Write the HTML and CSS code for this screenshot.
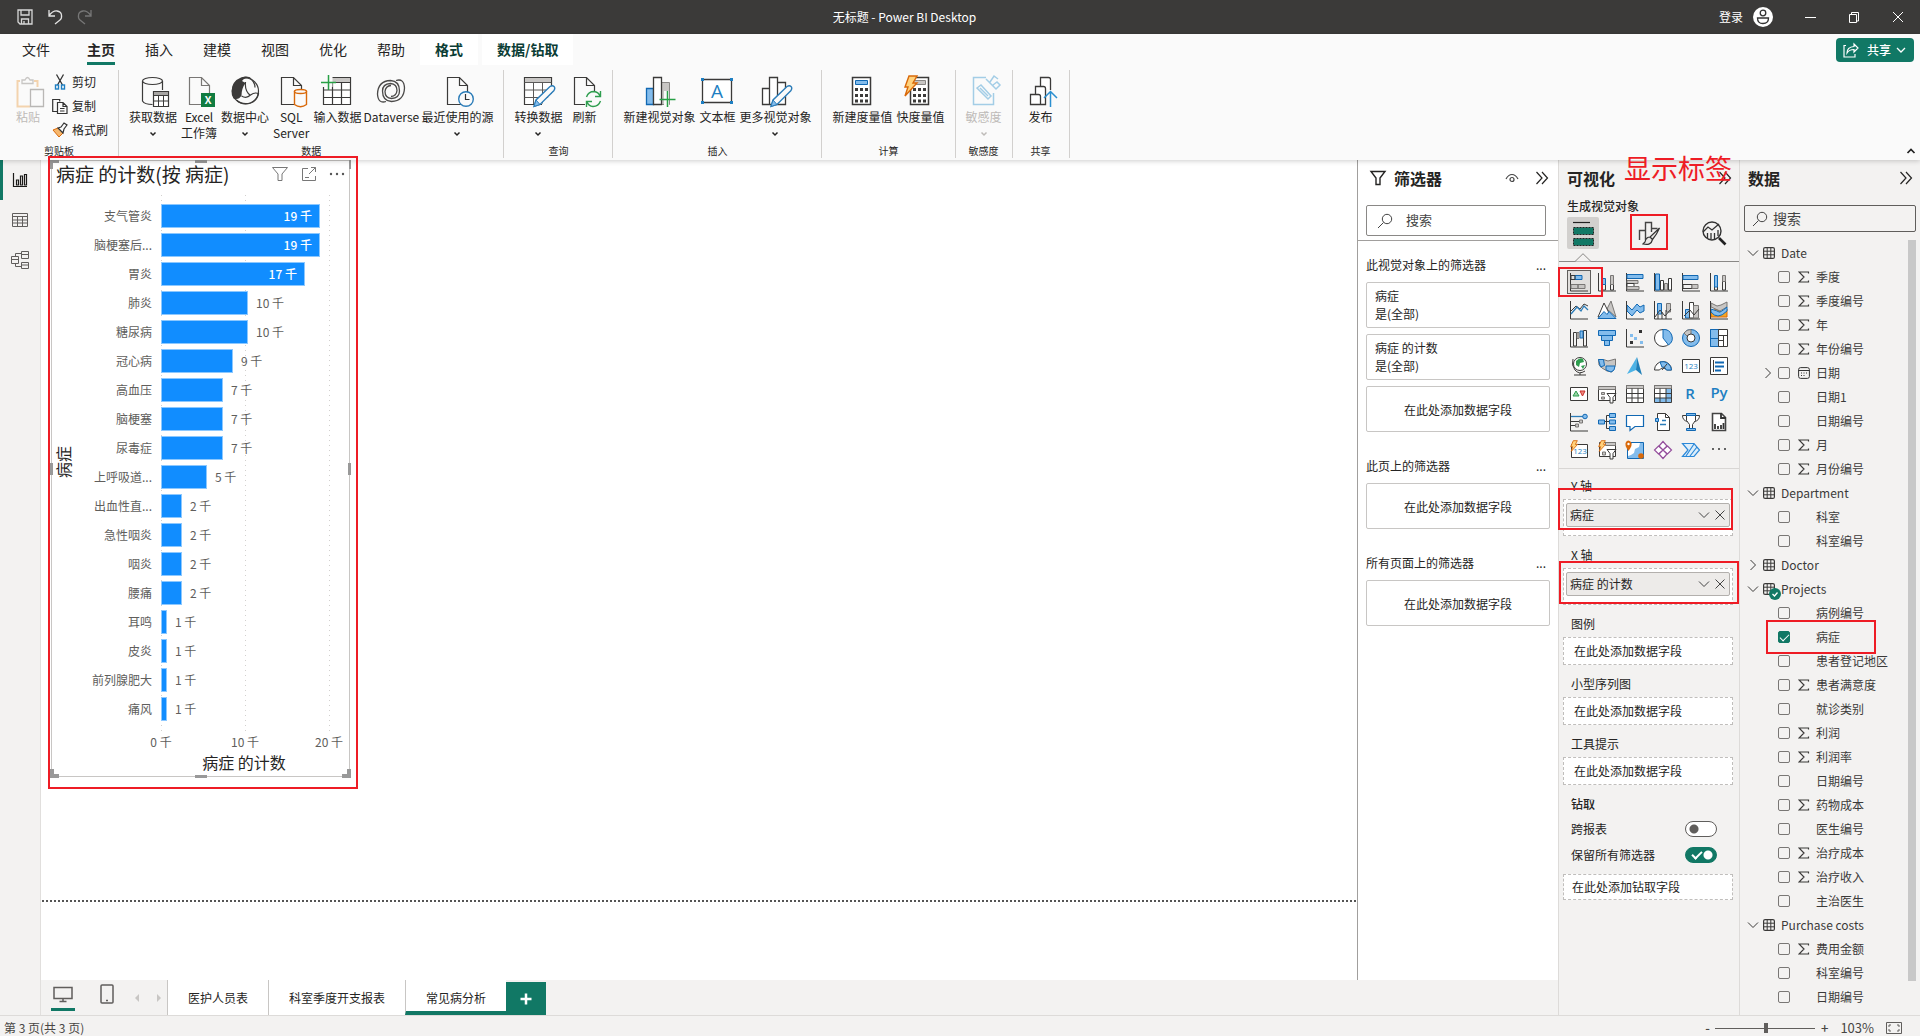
FILE: index.html
```html
<!DOCTYPE html>
<html lang="zh-CN">
<head>
<meta charset="utf-8">
<title>无标题 - Power BI Desktop</title>
<link rel="stylesheet" href="styles.css">
</head>
<body>
<svg class="defs" aria-hidden="true">
  <symbol id="chev-down" viewBox="0 0 12 12"><path d="M1 3.500l5 5 5-5" fill="none" stroke="currentColor"/></symbol>
  <symbol id="chev-right" viewBox="0 0 12 12"><path d="M3.500 1l5 5-5 5" fill="none" stroke="currentColor"/></symbol>
  <symbol id="drop" viewBox="0 0 8 8"><path d="M1.500 2.500L4 5l2.500-2.500" fill="none" stroke="currentColor" stroke-width="1.500"/></symbol>
  <symbol id="collapse" viewBox="0 0 14 14"><path d="M1.500 1l5.500 6-5.500 6M7 1l5.500 6L7 13" fill="none" stroke="currentColor" stroke-width="1.200"/></symbol>
  <symbol id="search" viewBox="0 0 16 16"><circle cx="10" cy="6" r="4.700" fill="none" stroke="currentColor"/><path d="M6.500 9.500L1 15" stroke="currentColor"/></symbol>
  <symbol id="sigma" viewBox="0 0 12 12"><path d="M10.500 2.500V1H1l5 5-5 5h9.500V9.500" fill="none" stroke="currentColor" stroke-width="1.200"/></symbol>
  <symbol id="table" viewBox="0 0 12 12"><rect x=".6" y=".6" width="10.800" height="10.800" rx="1.500" fill="none" stroke="currentColor" stroke-width="1.200"/><path d="M4.200.6v10.800M7.800.6v10.800M.6 4.200h10.800M.6 7.800h10.800" stroke="currentColor"/></symbol>
  <symbol id="close" viewBox="0 0 12 12"><path d="M1.500 1.500l9 9M10.500 1.500l-9 9" stroke="currentColor"/></symbol>
  <symbol id="filter" viewBox="0 0 18 18"><path d="M2 2.500h14L11 9v6.500H7V9z" fill="none" stroke="currentColor" stroke-width="1.400"/></symbol>
  <symbol id="doc" viewBox="0 0 36 36"><path d="M8.500 31.500v-27h12l8 8v19zM20.500 4.500v8h8" fill="#fafafa" stroke="#3b3a39" stroke-width="1.200"/></symbol>
  <symbol id="pencil" viewBox="0 0 36 36"><path d="M14 33.500l2-6.500L30 13.500q2.500-1.500 4 0t0 4L20 31.500z" fill="#fafafa" stroke="#2b7cb8" stroke-width="1.400"/><path d="M14 33.500l2-6.500 4 4.500z" fill="#83bcec" stroke="#2b7cb8"/></symbol>
  <symbol id="bolt" viewBox="0 0 12 18"><path d="M5 1h6L8 6.500h3.500L2 17l2-7H1z" fill="#ffd27d" stroke="#d9690a" stroke-width="1.300"/></symbol>
</svg>

<header class="titlebar">
  <div class="quick">
    <button aria-label="保存"><svg width="16" height="16"><path d="M1 1h14v14H3l-2-2zM4 1v5h8V1M4.500 15v-5h7v5M7 12v3" fill="none" stroke="#d8d8d8" stroke-width="1.300"/></svg></button>
    <button aria-label="撤消"><svg width="16" height="16"><path d="M2 1v6h6M2 6.500Q6 1.500 10 2t4.500 4-1.500 5l-5 4" fill="none" stroke="#e4e4e4" stroke-width="1.300"/></svg></button>
    <button aria-label="恢复"><svg width="16" height="16"><path d="M14 1v6H8M14 6.500Q10 1.500 6 2T1.500 6t1.500 5l5 4" fill="none" stroke="#777" stroke-width="1.300"/></svg></button>
  </div>
  <div class="window-title">无标题 - Power BI Desktop</div>
  <div class="account"><button>登录</button><svg width="20" height="20"><circle cx="10" cy="10" r="10" fill="#fff"/><circle cx="10" cy="6" r="2.800" fill="none" stroke="#333" stroke-width="1.300"/><path d="M4.500 11h11q0 5.500-5.500 5.500T4.500 11z" fill="none" stroke="#333" stroke-width="1.300"/></svg></div>
  <div class="window-controls">
    <button aria-label="最小化"><svg width="12" height="12"><path d="M1 6.500h11" stroke="#fff"/></svg></button>
    <button aria-label="还原"><svg width="12" height="12"><path d="M1.500 3.500h7v8h-7zM3.500 3V1.500h7V10H9" fill="none" stroke="#fff"/></svg></button>
    <button aria-label="关闭"><svg width="12" height="12"><path d="M1 1l10 10M11 1L1 11" stroke="#fff"/></svg></button>
  </div>
</header>

<div class="ribbon">
  <nav class="tabs">
    <button class="tab file">文件</button><button class="tab active"><span>主页</span></button><button class="tab">插入</button><button class="tab">建模</button><button class="tab">视图</button><button class="tab">优化</button><button class="tab">帮助</button><button class="tab ctx">格式</button><button class="tab ctx">数据/钻取</button>
    <button class="share"><svg width="16" height="16"><path d="M3 3.500H1v11.500h11V12M4 11q0-6 7-6.500V2l4 4-4 4V7.500Q6 7.500 4 11z" fill="none" stroke="#fff" stroke-width="1.200"/></svg>共享<svg width="10" height="10"><path d="M1 3l4 4 4-4" fill="none" stroke="#fff" stroke-width="1.300"/></svg></button>
  </nav>
  <div class="groups">
    <section class="group">
      <div class="items">
        <button class="item off"><svg width="36" height="36"><path d="M10 8H7.500v25.500H20M24 8h3.500v6" fill="none" stroke="#f3d3ae" stroke-width="2"/><path d="M12 10.500h11V7h-3Q17.500 2 15 7h-3z" fill="#fafafa" stroke="#c8c6c4" stroke-width="1.300"/><path d="M20.500 16.500h13v17h-13z" fill="#fafafa" stroke="#b9b7b5" stroke-width="1.300"/></svg>粘贴</button>
        <div class="small-items">
          <button><svg width="16" height="16"><path d="M4.500.5l6 10.500M11.500.5L5.500 11" stroke="#333" stroke-width="1.300"/><rect x="3.500" y="11" width="3" height="4" fill="none" stroke="#1e7fc2" stroke-width="1.400"/><rect x="9.500" y="11" width="3" height="4" fill="none" stroke="#1e7fc2" stroke-width="1.400"/></svg>剪切</button>
          <button><svg width="16" height="16"><path d="M5 13.500H.7V1.500h7v2M5.500 4.500h5.500l4 4v7H5.500zM11 4.500v4h4M8 10.500h4.500M8 13h4.500" fill="none" stroke="#333" stroke-width="1.200"/></svg>复制</button>
          <button><svg width="16" height="16"><path d="M1 8l5-2 5 5-4 4z" fill="#f6b76d" stroke="#d9690a"/><path d="M6 6l3-1 3-4 3 2-3 4-1 4z" fill="#fafafa" stroke="#333" stroke-width="1.200"/></svg>格式刷</button>
        </div>
      </div>
      <h3>剪贴板</h3>
    </section>
    <section class="group">
      <div class="items">
        <button class="item"><svg width="36" height="36"><path d="M7.500 8v20q2 3.500 10 3.500M27.500 8v9" fill="none" stroke="#3b3a39" stroke-width="1.200"/><ellipse cx="17.500" cy="8" rx="10" ry="3.500" fill="none" stroke="#3b3a39" stroke-width="1.200"/><path d="M18.500 18.500h15v15h-15z" fill="#fff" stroke="#3b3a39" stroke-width="1.200"/><path d="M19 19h14v3H19z" fill="#a7a5a3"/><path d="M18.500 22.500h15M18.500 28h15M23.500 22v11M28.500 22v11" stroke="#3b3a39"/></svg>获取数据<svg class="drop"><use href="#drop"/></svg></button>
        <button class="item"><svg width="36" height="36"><path d="M8.500 31.500v-27h12l8 8v19zM20.500 4.500v8h8" fill="#fafafa" stroke="#797775" stroke-width="1.200"/><path d="M20 20h14v14H20z" fill="#107c41"/><text x="27" y="31" class="xl">X</text></svg>Excel<br>工作簿</button>
        <button class="item"><svg width="36" height="36"><circle cx="18.500" cy="18" r="13" fill="#fafafa" stroke="#3b3a39" stroke-width="1.200"/><path d="M15 8q3-4 9-3-5-2-10-.5Q5 8 4.500 18q-.2 4 2 7.500 5 2 8-3 0-7 4-12.500z" fill="#3b3a39"/><path d="M13 7q3-4 9-2.500 6 4 6 10M18.500 9q-1 9 5 13.500M14.500 23q5 3 9-1 4-3 8-1.500-1 7-8 9.500-9 2-14-3" fill="none" stroke="#3b3a39" stroke-width="1.200"/></svg>数据中心<svg class="drop"><use href="#drop"/></svg></button>
        <button class="item"><svg width="36" height="36"><use href="#doc"/><path d="M21.500 18.500v13q6 4.500 12 0v-13z" fill="#fafafa" stroke="#d9690a" stroke-width="1.400"/><ellipse cx="27.500" cy="18.500" rx="6" ry="2" fill="#fafafa" stroke="#d9690a" stroke-width="1.400"/></svg>SQL<br>Server</button>
        <button class="item"><svg width="36" height="36"><path d="M4.500 4.500h27v27h-27z" fill="#fff" stroke="#3b3a39" stroke-width="1.200"/><path d="M5 5h26v4H5z" fill="#c8c6c4"/><path d="M4.500 9.500h27M4.500 17h27M4.500 24.500h27M13.500 9v22M22.500 9v22" stroke="#3b3a39" stroke-width="1.200"/><path d="M3 2h10.500v12H3z" fill="#fafafa"/><path d="M2 9.500h15M9.500 2v15" stroke="#27a045" stroke-width="1.500"/></svg>输入数据</button>
        <button class="item tight"><svg width="36" height="36"><g fill="none" stroke="#4a4948" stroke-width="1.300"><path id="swirl" d="M13 28.500Q5 31 4.500 21 5 8 17.500 7.500q9 .5 9 10.500 0 7-8 7.500-6.500-.5-6.500-7 .5-5.500 6-6"/><use href="#swirl" transform="rotate(180 18 18)"/></g></svg>Dataverse</button>
        <button class="item"><svg width="36" height="36"><use href="#doc"/><circle cx="27" cy="26" r="7.300" fill="#fafafa" stroke="#2b7cb8" stroke-width="1.400"/><path d="M26.500 21v5.500h4" fill="none" stroke="#333" stroke-width="1.200"/></svg>最近使用的源<svg class="drop"><use href="#drop"/></svg></button>
      </div>
      <h3>数据</h3>
    </section>
    <section class="group">
      <div class="items">
        <button class="item"><svg width="36" height="36"><path d="M4.500 4.500h27v27h-27z" fill="#fff" stroke="#3b3a39" stroke-width="1.200"/><path d="M5 5h26v4H5z" fill="#c8c6c4"/><path d="M4.500 9.500h27M4.500 17h27M4.500 24.500h27M13.500 9v22M22.500 9v22" stroke="#5b5a59"/><path d="M22 31L33 19v14H22z" fill="#fafafa"/><use href="#pencil"/></svg>转换数据<svg class="drop"><use href="#drop"/></svg></button>
        <button class="item"><svg width="36" height="36"><use href="#doc"/><path d="M19 18h17v18H19z" fill="#fafafa"/><path d="M20.500 24q2-5.500 7.500-5.500 4.500.5 6 4.500M34.500 18v5.500H29M34.500 28q-2 5.500-7.500 5.500-4.500-.5-6-4.500M20.500 34v-5.500H26" fill="none" stroke="#2f9e4f" stroke-width="1.400"/></svg>刷新</button>
      </div>
      <h3>查询</h3>
    </section>
    <section class="group">
      <div class="items">
        <button class="item"><svg width="36" height="36"><path d="M5.500 15.500h7v16h-7z" fill="#83bcec" stroke="#1168b3" stroke-width="1.300"/><path d="M20.500 9.500h8v22h-8z" fill="#c8c6c4" stroke="#8a8886"/><path d="M12.500 4.500h8v27h-8z" fill="#fff" stroke="#3b3a39" stroke-width="1.300"/><path d="M23 18h5v16h-5z" fill="#fafafa"/><path d="M26.500 18v16M18.500 26.500h16" stroke="#27a045" stroke-width="1.500"/></svg>新建视觉对象</button>
        <button class="item"><svg width="36" height="36"><path d="M3.500 6.500h29v23h-29z" fill="#fff" stroke="#3b3a39" stroke-width="1.300"/><path d="M2 5h3v3H2zM31 5h3v3h-3zM2 28h3v3H2zM31 28h3v3h-3z" fill="#1e7fc2"/><text x="18" y="25" class="box-a">A</text></svg>文本框</button>
        <button class="item"><svg width="36" height="36"><path d="M5.500 15.500h7v16h-7zM20.500 9.500h8v22h-8zM12.500 4.500h8v27h-8z" fill="#fff" stroke="#3b3a39" stroke-width="1.300"/><use href="#pencil"/></svg>更多视觉对象<svg class="drop"><use href="#drop"/></svg></button>
      </div>
      <h3>插入</h3>
    </section>
    <section class="group">
      <div class="items">
        <button class="item"><svg width="36" height="36"><path d="M8.500 4.500h18v27h-18z" fill="#fff" stroke="#3b3a39" stroke-width="1.500"/><path d="M11.500 7.500h12v4h-12z" fill="#83bcec" stroke="#1168b3"/><path d="M11 16.500h14M11 22.500h14M11 28h14" stroke="#3b3a39" stroke-width="3" stroke-dasharray="3 2"/></svg>新建度量值</button>
        <button class="item"><svg width="36" height="36"><path d="M8.500 4.500h18v27h-18z" fill="#fff" stroke="#3b3a39" stroke-width="1.500"/><path d="M11.500 7.500h12v4h-12z" fill="#c8c6c4" stroke="#8a8886"/><path d="M11 16.500h14M11 22.500h14M11 28h14" stroke="#3b3a39" stroke-width="3" stroke-dasharray="3 2"/><path d="M7 3h8l-4 7h4L3 23l3-9H3z" fill="#ffd27d" stroke="#d9690a" stroke-width="1.400"/></svg>快度量值</button>
      </div>
      <h3>计算</h3>
    </section>
    <section class="group">
      <div class="items">
        <button class="item off"><svg width="36" height="36" fill="none" stroke="#a3cde6" stroke-width="1.500"><path d="M20 4.500H7.500v27h20V20"/><path d="M11 15l4-3 10 11-3 3zM14 15l8 8M20 6l10 10 4-4-3-3-4 3M24 9l4-6 4 3" /></svg>敏感度<svg class="drop"><use href="#drop"/></svg></button>
      </div>
      <h3>敏感度</h3>
    </section>
    <section class="group">
      <div class="items">
        <button class="item"><svg width="36" height="36"><path d="M7.500 21.500h8q2 0 2 2v8h-10zM12.500 21V13.500h8q2 0 2 2V31.500h-5M17.500 13V4.500h8q2 0 2 2V17" fill="#fff" stroke="#3b3a39" stroke-width="1.300"/><path d="M27.500 34V19M21 25l6.500-6.500L34 25" fill="none" stroke="#2b8fd0" stroke-width="1.500"/></svg>发布</button>
      </div>
      <h3>共享</h3>
    </section>
    <button class="ribbon-fold" aria-label="折叠功能区"><svg width="10" height="10"><path d="M1.500 7L5 3.500 8.500 7" fill="none" stroke="#222" stroke-width="1.700"/></svg></button>
  </div>
</div>

<main class="workspace">
  <nav class="rail">
    <button class="active" aria-label="报表视图"><svg width="18" height="18"><path d="M2.500 2v13.500H16M5.500 14V9h2v5zM9.500 14V5h2v9zM13.500 14V3.500h2V14z" fill="none" stroke="#1b1a19" stroke-width="1.200"/></svg></button>
    <button aria-label="数据视图"><svg width="18" height="18"><path d="M1.500 2.500h15v13h-15zM1.500 5.500h15M1.500 9h15M1.500 12h15M6.500 5.500v10M11.500 5.500v10" fill="none" stroke="#605e5c"/></svg></button>
    <button aria-label="模型视图"><svg width="18" height="18"><path d="M.5 5.500h7v7h-7zM.5 8.500h7M10.500.5h7v7h-7zM10.500 3.500h7M10.500 11.500h7v6h-7zM10.500 14h7M4.500 5.500v-3h6M4.500 12.500v3h6" fill="none" stroke="#605e5c"/></svg></button>
  </nav>

  <div class="center">
    <div class="stage">
      <section class="canvas">
        <article class="visual">
          <span class="mark mark-visual"></span>
          <i class="h nw"></i><i class="h n"></i><i class="h ne"></i><i class="h w"></i><i class="h e"></i><i class="h sw"></i><i class="h s"></i><i class="h se"></i>
          <header>
            <h2>病症 的计数(按 病症)</h2>
            <svg width="18" height="18"><path d="M1.500 2.500h15L11 9v6.500H7V9z" fill="none" stroke="#777"/></svg>
            <svg width="16" height="16"><path d="M7 2.500H1.500v12h13V10M4 11.500h4M10 1.500h4.500V6M14.500 1.500L8 8" fill="none" stroke="#777"/></svg>
            <svg width="16" height="16" fill="#555"><circle cx="2" cy="8" r="1.200"/><circle cx="8" cy="8" r="1.200"/><circle cx="14" cy="8" r="1.200"/></svg>
          </header>
          <div class="chart">
            <div class="ytitle">病症</div>
            <ul class="bars">
              <li><span>支气管炎</span><b class="in" style="width:159px">19 千</b></li>
              <li><span>脑梗塞后...</span><b class="in" style="width:159px">19 千</b></li>
              <li><span>胃炎</span><b class="in" style="width:144px">17 千</b></li>
              <li><span>肺炎</span><b style="width:87px"></b>10 千</li>
              <li><span>糖尿病</span><b style="width:87px"></b>10 千</li>
              <li><span>冠心病</span><b style="width:72px"></b>9 千</li>
              <li><span>高血压</span><b style="width:62px"></b>7 千</li>
              <li><span>脑梗塞</span><b style="width:62px"></b>7 千</li>
              <li><span>尿毒症</span><b style="width:62px"></b>7 千</li>
              <li><span>上呼吸道...</span><b style="width:46px"></b>5 千</li>
              <li><span>出血性直...</span><b style="width:21px"></b>2 千</li>
              <li><span>急性咽炎</span><b style="width:21px"></b>2 千</li>
              <li><span>咽炎</span><b style="width:21px"></b>2 千</li>
              <li><span>腰痛</span><b style="width:21px"></b>2 千</li>
              <li><span>耳鸣</span><b style="width:6px"></b>1 千</li>
              <li><span>皮炎</span><b style="width:6px"></b>1 千</li>
              <li><span>前列腺肥大</span><b style="width:6px"></b>1 千</li>
              <li><span>痛风</span><b style="width:6px"></b>1 千</li>
            </ul>
          </div>
          <div class="xticks"><span>0 千</span><span>10 千</span><span>20 千</span></div>
          <div class="xtitle">病症 的计数</div>
        </article>
        <div class="page-edge"></div>
      </section>

      <aside class="filters">
        <header class="filters-head">
          <div class="pane-title"><svg width="18" height="18"><use href="#filter"/></svg><h2>筛选器</h2><svg class="eye" width="14" height="14"><path d="M1 8q2.500-4.500 6-4.500T13 8" fill="none" stroke="#444" stroke-width="1.200"/><circle cx="7" cy="8.500" r="2" fill="none" stroke="#444" stroke-width="1.200"/></svg><svg width="14" height="14"><use href="#collapse"/></svg></div>
          <label class="search"><svg width="16" height="16"><use href="#search"/></svg><input type="text" placeholder="搜索" aria-label="搜索筛选器"></label>
        </header>
        <section><h4>此视觉对象上的筛选器<span>...</span></h4>
          <div class="card">病症<br>是(全部)</div>
          <div class="card">病症 的计数<br>是(全部)</div>
          <div class="card drop-here">在此处添加数据字段</div></section>
        <section><h4>此页上的筛选器<span>...</span></h4><div class="card drop-here">在此处添加数据字段</div></section>
        <section><h4>所有页面上的筛选器<span>...</span></h4><div class="card drop-here">在此处添加数据字段</div></section>
      </aside>
    </div>
    <nav class="pages">
      <button class="view on" aria-label="桌面布局"><svg width="20" height="16"><path d="M1 1.500h18v11H1zM10 12.500V15M6.500 15.500h7" fill="none" stroke="#605e5c" stroke-width="1.500"/></svg></button>
      <button class="view phone" aria-label="移动布局"><svg width="14" height="20"><rect x="1" y="1" width="12" height="18" rx="1" fill="none" stroke="#605e5c" stroke-width="1.500"/><path d="M6 16.500h2" stroke="#605e5c" stroke-width="1.500"/></svg></button>
      <button class="arrow" aria-label="上一页"><svg width="6" height="10"><path d="M5 1v8L1 5z" fill="#c8c6c4"/></svg></button>
      <button class="arrow" aria-label="下一页"><svg width="6" height="10"><path d="M1 1v8l4-4z" fill="#c8c6c4"/></svg></button>
      <button class="page">医护人员表</button><button class="page">科室季度开支报表</button><button class="page current">常见病分析</button>
      <button class="add" aria-label="新建页"><svg width="12" height="12"><path d="M6 .5v11M.5 6h11" stroke="#fff" stroke-width="2.500"/></svg></button>
    </nav>
  </div>

  <aside class="viz">
    <div class="pane-title"><h2>可视化</h2><svg width="14" height="14"><use href="#collapse"/></svg></div>
    <span class="note">显示标签</span>
    <h3 class="sub">生成视觉对象</h3>
    <div class="modes">
      <button class="on" aria-label="生成视觉对象"><svg width="24" height="26"><path d="M2 2.500h17" stroke="#222" stroke-width="1.200"/><path d="M2.500 7.500h20v7h-20zM2.500 18.500h20v7h-20z" fill="#117865" stroke="#222" stroke-dasharray="2 1"/></svg></button>
      <button class="fmt" aria-label="设置视觉对象格式"><svg width="24" height="26"><path d="M2.500 20V10.500h6M8.500 20V2.500h6V12M14.500 8.500h6" fill="none" stroke="#444" stroke-width="1.400"/><path d="M22.500 8L13 17l2.500 2.500Q20 14 22.500 8zM13 17q-4 0-5 5l-2 2q8 2 9.500-4.500" fill="#e8e6e4" stroke="#333" stroke-width="1.200"/></svg><span class="mark mark-fmt"></span></button>
      <button aria-label="分析"><svg width="26" height="26"><circle cx="11" cy="11" r="9" fill="none" stroke="#333" stroke-width="1.400"/><path d="M18 18l6.500 6.500" stroke="#222" stroke-width="2.600"/><path d="M2 12l5-5 4 3 7-6M6.500 18v-5M10 19v-6M13.500 19v-6M17 16v-6" fill="none" stroke="#333" stroke-width="1.300"/></svg></button>
    </div>
    <svg class="caret" width="18" height="9"><path d="M0 8.500h1L9 .7l8 7.800h1" fill="#f3f2f1" stroke="#8a8886"/></svg>
    <div class="gallery">
      <button class="on"><svg viewBox="0 0 20 20"><path class="k" d="M1.500 1v18H19"/><path class="g" d="M2 12.500h7v4H2zM9 12.500h7v4H9z"/><path class="b" d="M6 3.500h7v4H6z"/><path class="k" d="M2 3.500h4v4H2z"/></svg><span class="mark mark-gal"></span></button>
      <button><svg viewBox="0 0 20 20"><path class="k" d="M1.500 1v18H19M5.500 12.500h3V18h-3zM13.500 12.500h3V18h-3z"/><path class="b" d="M5.500 6.500h3v6h-3z"/><path class="g" d="M13.500 3.500h3v9h-3z"/></svg></button>
      <button><svg viewBox="0 0 20 20"><path class="k" d="M1.500 1v18H19"/><path class="b" d="M2 2.500h16v4H2z"/><path class="g" d="M2 8.500h11v3H2z"/><path class="w" d="M2 11.500h7v3H2z"/><path class="g" d="M2 14.500h12v3H2z"/></svg></button>
      <button><svg viewBox="0 0 20 20"><path class="k" d="M1.500 1v18H19"/><path class="b" d="M2.500 2v16h4V2z"/><path class="w" d="M7.500 8.500h3V18h-3z"/><path class="g" d="M11.500 11.500h3V18h-3z"/><path class="w" d="M15.500 6.500h3V18h-3z"/></svg></button>
      <button><svg viewBox="0 0 20 20"><path class="k" d="M1.500 1v18H19M2 12.500h9v4H2z"/><path class="b" d="M2 3.500h15v4H2z"/><path class="g" d="M11 12.500h6v4h-6z"/></svg></button>
      <button><svg viewBox="0 0 20 20"><path class="k" d="M1.500 1v18H19M13.500 8.500h3V18h-3zM5.500 14h3v4h-3z"/><path class="b" d="M5.500 3.500h3V15h-3z"/><path class="g" d="M13.500 3.500h3v6h-3z"/></svg></button>

      <button><svg viewBox="0 0 20 20"><path class="k" d="M1.500 1v18H19M2 11l5-5 4 3 4-5 4 2"/><path class="bl" d="M2 14l6-7 4 4 3-5 4 4"/></svg></button>
      <button><svg viewBox="0 0 20 20"><path class="g" d="M10 9l4-8 5 16z"/><path class="w" d="M1 17L7 3l7 14z"/><path class="b" d="M1 18.500l6-7 3 3 2-3 7 7z"/></svg></button>
      <button><svg viewBox="0 0 20 20"><path class="b" d="M2 5l5 5 5-6 3 3 4-2v6l-4 2-3-3-5 6-5-5z"/><path class="k" d="M1.500 1v18H19"/></svg></button>
      <button><svg viewBox="0 0 20 20"><path class="b" d="M4.500 3.500h4V14h-4z"/><path class="g" d="M13.500 3.500h4V12h-4z"/><path class="k" d="M1.500 1v18H19M5 14v5M9 12v7M13 10v9M2 17l5-7 5 6 6-7"/></svg></button>
      <button><svg viewBox="0 0 20 20"><path class="b" d="M4.500 9.500h4V18h-4z"/><path class="w" d="M8.500 2.500h4V18h-4z"/><path class="g" d="M12.500 5.500h5V18h-5z"/><path class="k" d="M1.500 1v18H19M3 16l6-6 4 5 5-6"/></svg></button>
      <button><svg viewBox="0 0 20 20"><path d="M2 12l5-3 5 3 6-3v8H2z" fill="#f5a623" stroke="#d9690a"/><path class="g" d="M2 3l6 3 4-1 6-3v5l-7 4-9-4z"/><path class="b" d="M2 9q7 2 8 3t8-5v4q-5 5-9 5t-7-4z"/><path class="k" d="M1.500 1v18H19"/></svg></button>

      <button><svg viewBox="0 0 20 20"><path class="k" d="M1.500 1v18H19M4.500 4.500h3V18h-3zM14.500 2.500h3V18h-3z"/><path class="b" d="M11 3v7h3V3z"/><path class="g" d="M8 4.500h2v6H8z"/></svg></button>
      <button><svg viewBox="0 0 20 20"><path class="b" d="M1.500 2.500h17v5h-17zM4.500 7.500h11v5h-11zM7.500 12.500h5v5h-5z"/></svg></button>
      <button><svg viewBox="0 0 20 20"><path class="k" d="M1.500 1v18H19"/><path d="M14 2h3v3h-3zM5 13h3v3H5z" fill="#333"/><path d="M5 6h3v3H5zM9 9h3v3H9zM15 13h3v3h-3z" fill="#83bcec"/></svg></button>
      <button><svg viewBox="0 0 20 20"><circle class="w" cx="10" cy="10" r="8.500"/><path class="b" d="M10 1.500V10l5.500 7A8.500 8.500 0 0010 1.500z"/></svg></button>
      <button><svg viewBox="0 0 20 20"><circle class="b" cx="10" cy="10" r="8.500"/><path class="g" d="M3 5a8.500 8.500 0 017-3.500V6L6 8z"/><circle class="w" cx="10" cy="10" r="4"/></svg></button>
      <button><svg viewBox="0 0 20 20"><path class="w" d="M1.500 1.500h17v17h-17z"/><path class="b" d="M1.500 1.500h8v9h-8zM1.500 10.500h8v8h-8z"/><path class="k" d="M9.500 7.500h9M14.500 7.500v11M9.500 12.500h5M9.500 1.500v17"/></svg></button>

      <button><svg viewBox="0 0 20 20"><circle class="w" cx="11" cy="8" r="6.500"/><path d="M7 5q4-4 7-2l1 3-4 1-1 4-3-2zM12 10l4-1-2 4z" fill="#2f9e4f"/><path class="k" d="M4 3q-2 6 2 11t10 1M11 17v2M5 19h12"/></svg></button>
      <button><svg viewBox="0 0 20 20"><path class="g" d="M1.500 3.500h5L11 5l7.500-2v6L15 16l-5-1-5-3-3-3z"/><path class="b" d="M1.500 3.500h5l1 6-4 1.500zM9 10h9q0 5-4 6l-5-2z"/></svg></button>
      <button><svg viewBox="0 0 20 20"><path d="M12 1L2 18l9-4z" fill="#4db3e6"/><path d="M12 1l5 18-6-5z" fill="#1f7fb8"/></svg></button>
      <button><svg viewBox="0 0 20 20"><path class="w" d="M1.500 14a8.500 8.500 0 0117 0h-5a4 4 0 00-7 0z"/><path class="b" d="M7 6a9 9 0 0111.500 8h-5Q12 10 9 11z"/><path class="k" d="M9 14l5-6"/></svg></button>
      <button><svg viewBox="0 0 20 20"><path class="w" d="M1.500 3.500h17v13h-17z"/><text x="10" y="13">123</text></svg></button>
      <button><svg viewBox="0 0 20 20"><path class="w" d="M1.500 1.500h17v17h-17z"/><path class="k" d="M4.500 4v12"/><path d="M6 6.500h9M6 10.500h9M6 14.500h6" stroke="#1168b3" stroke-width="2"/></svg></button>

      <button><svg viewBox="0 0 20 20"><path class="w" d="M1.500 3.500h17v13h-17z"/><path d="M4 12l3-5 3 5z" fill="#9bd3a8" stroke="#2f9e4f"/><path d="M11 7h5l-2.500 5z" fill="#f08a80" stroke="#c9302c"/></svg></button>
      <button><svg viewBox="0 0 20 20"><path class="w" d="M1.500 2.500h17v14h-17z"/><path class="g" d="M1.500 2.500h17v3h-17zM4.500 8.500h3v2h-3zM4.500 13h3v2h-3z"/><path class="w" d="M10 9.500h9l-3 4V19h-3v-5.500z"/></svg></button>
      <button><svg viewBox="0 0 20 20"><path class="w" d="M1.500 1.500h17v17h-17z"/><path class="g" d="M1.500 1.500h17v3h-17z"/><path class="k" d="M1.500 9.500h17M1.500 14h17M7 4.500v14M13 4.500v14"/></svg></button>
      <button><svg viewBox="0 0 20 20"><path class="w" d="M1.500 1.500h17v17h-17z"/><path d="M13 5h5v13h-5zM2 14h16v4H2z" fill="#83bcec"/><path class="g" d="M1.500 1.500h17v3h-17z"/><path class="k" d="M1.500 9.500h17M1.500 14h17M7 4.500v14M13 4.500v14"/></svg></button>
      <button><svg viewBox="0 0 20 20"><text class="big" x="9" y="15">R</text></svg></button>
      <button><svg viewBox="0 0 20 20"><text class="big" x="10" y="14">Py</text></svg></button>

      <button><svg viewBox="0 0 20 20"><path class="k" d="M1.500 1v18H19M2 9.500h10M2 13.500h5"/><path class="bl" d="M2 4.500h12"/><circle class="b" cx="16" cy="4.500" r="2.300"/><path class="g" d="M10.500 8h3v3h-3zM6.500 12h3v3h-3z"/></svg></button>
      <button><svg viewBox="0 0 20 20"><path class="k" d="M7 9.500h5M9.500 3.500v13M9.500 3.500H13M9.500 16.500H13"/><path class="b" d="M1.500 8h6v4h-6zM12.500 1.500h6v4h-6zM12.500 8h6v4h-6zM12.500 14.500h6v4h-6z"/></svg></button>
      <button><svg viewBox="0 0 20 20"><path d="M1.500 3.500h17v11H10L5 18.500v-4H1.500z" fill="#fff" stroke="#1168b3" stroke-width="1.200"/></svg></button>
      <button><svg viewBox="0 0 20 20"><path class="w" d="M4.500 1.500h8l4 4v13h-12z"/><path class="k" d="M12.500 1.500v4h4"/><path class="b" d="M2.500 6.500h3v3h-3z"/><path class="bl" d="M9 8.500h4M7 12.500h6"/></svg></button>
      <button><svg viewBox="0 0 20 20"><path class="w" d="M5.500 3.500h-4q0 5 5 6M14.500 3.500h4q0 5-5 6M5.500 1.500h9v7l-3 4v4h-3v-4l-3-4z"/><path class="b" d="M5.500 1.500h9v2h-9zM5.500 16.500h9v2h-9z"/></svg></button>
      <button><svg viewBox="0 0 20 20"><path d="M3.500 1.500h9l4 4v13h-13z" fill="#fff" stroke="#444" stroke-width="1.600"/><path d="M12 1v5h5M6 12v5M9 14v3M12 13v4M14.500 11v6" stroke="#333" stroke-width="1.800" fill="none"/></svg></button>

      <button><svg viewBox="0 0 20 20"><path class="w" d="M2.500 4.500h16v13h-16z"/><text x="11" y="14">123</text><use href="#bolt" width="10" height="12"/></svg></button>
      <button><svg viewBox="0 0 20 20"><path class="w" d="M2.500 2.500h16v14h-16z"/><path class="g" d="M8.500 2.500h10v3h-10zM5.500 12h3v3h-3z"/><path class="w" d="M10 9.500h9l-3 4V19h-3v-5.500z"/><use href="#bolt" width="10" height="12"/></svg></button>
      <button><svg viewBox="0 0 20 20"><path class="b" d="M2.500 2.500h16v16h-16z"/><path d="M7 3h8l-1 4-4 2-1 4-3 2-3 1V9z" fill="#fff"/><path d="M3.500 11Q-1 5 1 2t5 0q2 3-2.500 9z" fill="#d9690a"/><circle cx="3.500" cy="4" r="1.200" fill="#fff"/><circle cx="16" cy="16" r="2.800" fill="#d9690a"/></svg></button>
      <button><svg viewBox="0 0 20 20" fill="#fff" stroke="#944e9c" stroke-width="1.200"><path d="M10 1.500l4 4.500-4 4-4-4zM10 10l4 4-4 4.500-4-4.500zM5.500 6L10 10l-4.500 4-4-4zM14.500 6l4 4-4 4L10 10z"/></svg></button>
      <button><svg viewBox="0 0 20 20" fill="#dceefb" stroke="#2b88d8" stroke-width="1.200"><path d="M1.500 3.500H13l5.500 6.500-5.500 6.500H1.500L7 10z"/><path d="M5 16l8-12M9 16l7-9"/></svg></button>
      <button><svg viewBox="0 0 20 20" fill="#333"><circle cx="4" cy="9" r="1"/><circle cx="10" cy="9" r="1"/><circle cx="16" cy="9" r="1"/></svg></button>
    </div>
    <div class="wells">
      <h4>Y 轴</h4>
      <div class="well filled"><div class="chip">病症<svg><use href="#chev-down"/></svg><svg><use href="#close"/></svg></div><span class="mark mark-y"></span></div>
      <h4>X 轴</h4>
      <div class="well filled"><div class="chip">病症 的计数<svg><use href="#chev-down"/></svg><svg><use href="#close"/></svg></div><span class="mark mark-x"></span></div>
      <h4>图例</h4><div class="well">在此处添加数据字段</div>
      <h4>小型序列图</h4><div class="well">在此处添加数据字段</div>
      <h4>工具提示</h4><div class="well">在此处添加数据字段</div>
      <h4 class="strong">钻取</h4>
      <label class="toggle">跨报表<input type="checkbox"></label>
      <label class="toggle">保留所有筛选器<input type="checkbox" checked></label>
      <div class="well drill">在此处添加钻取字段</div>
    </div>
  </aside>

  <aside class="data">
    <div class="pane-title"><h2>数据</h2><svg width="14" height="14"><use href="#collapse"/></svg></div>
    <label class="search"><svg width="16" height="16"><use href="#search"/></svg><input type="text" placeholder="搜索" aria-label="搜索数据"></label>
    <div class="tree-wrap">
    <ul class="tree">
      <li class="t"><svg><use href="#chev-down"/></svg><svg><use href="#table"/></svg>Date</li>
      <li><label><input type="checkbox"><svg><use href="#sigma"/></svg>季度</label></li>
      <li><label><input type="checkbox"><svg><use href="#sigma"/></svg>季度编号</label></li>
      <li><label><input type="checkbox"><svg><use href="#sigma"/></svg>年</label></li>
      <li><label><input type="checkbox"><svg><use href="#sigma"/></svg>年份编号</label></li>
      <li class="has-kids"><svg><use href="#chev-right"/></svg><label><input type="checkbox"><svg viewBox="0 0 12 12"><rect x=".6" y=".6" width="10.800" height="10.800" rx="2" fill="none" stroke="#333"/><path d="M.6 3.500h10.800" stroke="#333"/><path d="M3 6h7M3 8.500h5" stroke="#333" stroke-dasharray="1 1.500"/></svg>日期</label></li>
      <li><label><input type="checkbox"><svg></svg>日期1</label></li>
      <li><label><input type="checkbox"><svg></svg>日期编号</label></li>
      <li><label><input type="checkbox"><svg><use href="#sigma"/></svg>月</label></li>
      <li><label><input type="checkbox"><svg><use href="#sigma"/></svg>月份编号</label></li>
      <li class="t"><svg><use href="#chev-down"/></svg><svg><use href="#table"/></svg>Department</li>
      <li><label><input type="checkbox"><svg></svg>科室</label></li>
      <li><label><input type="checkbox"><svg></svg>科室编号</label></li>
      <li class="t"><svg><use href="#chev-right"/></svg><svg><use href="#table"/></svg>Doctor</li>
      <li class="t used"><svg><use href="#chev-down"/></svg><svg><use href="#table"/></svg>Projects<svg class="badge" viewBox="0 0 12 12"><circle cx="6" cy="6" r="6" fill="#117865"/><path d="M3.500 6l2 2 3-3.500" fill="none" stroke="#fff" stroke-width="1.300"/></svg></li>
      <li><label><input type="checkbox"><svg></svg>病例编号</label></li>
      <li><label><input type="checkbox" checked><svg></svg>病症</label><span class="mark mark-field"></span></li>
      <li><label><input type="checkbox"><svg></svg>患者登记地区</label></li>
      <li><label><input type="checkbox"><svg><use href="#sigma"/></svg>患者满意度</label></li>
      <li><label><input type="checkbox"><svg></svg>就诊类别</label></li>
      <li><label><input type="checkbox"><svg><use href="#sigma"/></svg>利润</label></li>
      <li><label><input type="checkbox"><svg><use href="#sigma"/></svg>利润率</label></li>
      <li><label><input type="checkbox"><svg></svg>日期编号</label></li>
      <li><label><input type="checkbox"><svg><use href="#sigma"/></svg>药物成本</label></li>
      <li><label><input type="checkbox"><svg></svg>医生编号</label></li>
      <li><label><input type="checkbox"><svg><use href="#sigma"/></svg>治疗成本</label></li>
      <li><label><input type="checkbox"><svg><use href="#sigma"/></svg>治疗收入</label></li>
      <li><label><input type="checkbox"><svg></svg>主治医生</label></li>
      <li class="t"><svg><use href="#chev-down"/></svg><svg><use href="#table"/></svg>Purchase costs</li>
      <li><label><input type="checkbox"><svg><use href="#sigma"/></svg>费用金额</label></li>
      <li><label><input type="checkbox"><svg></svg>科室编号</label></li>
      <li><label><input type="checkbox"><svg></svg>日期编号</label></li>
    </ul>
    <div class="scrollbar"></div>
    </div>
  </aside>
</main>

<footer class="status">
  <span>第 3 页(共 3 页)</span>
  <div class="zoom"><b>-</b><input type="range" min="0" max="100" value="51" aria-label="缩放"><b>+</b><span>103%</span>
  <button aria-label="适应页面"><svg width="16" height="12"><path d="M.5.5h15v11H.5z" fill="none" stroke="#605e5c"/><path d="M3 5V3h2M11 3h2v2M3 7v2h2M11 9h2V7" fill="none" stroke="#605e5c"/></svg></button></div>
</footer>
</body>
</html>
```
FILE: styles.css
```css
* { box-sizing: border-box; }
body {
  margin: 0;
  min-height: 100vh;
  display: flex;
  flex-direction: column;
  background: #f3f2f1;
  color: #252423;
  font: 12px/16px "Noto Sans CJK SC", sans-serif;
}
button { border: 0; padding: 0; background: none; font: inherit; color: inherit; }
h2, h3, h4, ul { margin: 0; padding: 0; font-size: inherit; font-weight: 400; list-style: none; }
svg { display: block; flex: none; overflow: visible; }
.defs { width: 0; height: 0; position: absolute; }
.mark { position: absolute; border: 2px solid #ee1c25; z-index: 5; pointer-events: none; }

/* title bar */
.titlebar { display: flex; align-items: center; height: 34px; background: #3b3a39; color: #fff; }
.quick { display: flex; gap: 14px; width: 100px; padding-left: 17px; }
.window-title { flex: 1; text-align: center; }
.account { display: flex; align-items: center; gap: 10px; padding: 0 15px 0 10px; }
.window-controls { display: flex; }
.window-controls button { width: 44px; height: 34px; display: grid; place-items: center; }

/* ribbon */
.ribbon { position: relative; z-index: 2; background: #fafafa; box-shadow: 0 1px 5px rgba(0,0,0,.2); }
.tabs { display: flex; height: 36px; padding: 0 6px 0 7px; font-size: 14px; }
.tab { height: 31px; padding: 0 15px 2px; }
.tab.file { margin-right: 7px; }
.tab.active { padding-bottom: 0; font-weight: 700; }
.tab.active span { display: block; height: 31px; line-height: 30px; border-bottom: 3px solid #117865; }
.tab.ctx { background: #fff; color: #0b3d35; font-weight: 700; }
.tab.ctx + .ctx { margin-left: 4px; }
.share { display: flex; align-items: center; gap: 8px; height: 24px; margin: 4px 0 0 auto; padding: 0 8px 0 7px; border-radius: 4px; background: #117865; color: #fff; font-size: 12px; font-weight: 500; }
.share svg:last-child { margin-left: -3px; }
.groups { display: flex; height: 90px; }
.group { display: flex; flex-direction: column; height: 88px; padding: 3px 10px 0; border-right: 1px solid #d2d0ce; }
.items { display: flex; gap: 4px; height: 75px; }
.group h3 { font-size: 10px; line-height: 14px; text-align: center; }
.item { display: flex; flex-direction: column; align-items: center; min-width: 36px; white-space: nowrap; }
.item.off { color: #bebbb8; }
.item.tight { width: 52px; }
.drop { width: 8px; height: 8px; margin-top: 5px; }
.small-items { display: flex; flex-direction: column; gap: 8px; padding: 1px 0 0 2px; }
.small-items button { display: flex; align-items: center; gap: 4px; white-space: nowrap; }
.ribbon-fold { margin: auto 4px 4px auto; }
.xl { font: 700 10px "Open Sans", sans-serif; fill: #fff; text-anchor: middle; }
.box-a { font: 19px "Open Sans", sans-serif; fill: #1e7fc2; text-anchor: middle; }

/* workspace */
.workspace { flex: 1; display: grid; grid-template-columns: 41px 1fr 181px 181px; }
.rail { border-right: 1px solid #e1dfdd; }
.rail button { display: grid; place-items: center; width: 100%; height: 40px; padding-right: 3px; border-left: 3px solid transparent; }
.rail button.active { border-color: #117865; }
.center { display: flex; flex-direction: column; min-width: 0; }
.stage { flex: 1; display: grid; grid-template-columns: 1fr 201px; background: #fff; }
.canvas { position: relative; display: flex; flex-direction: column; padding: 0 1px 78px; }
.page-edge { margin-top: auto; height: 2px; background: repeating-linear-gradient(90deg, #555 0 2px, #fff 2px 4px); }

/* chart on the canvas */
.visual { position: absolute; left: 10px; top: 0; width: 299px; border: 1px solid #c8c6c4; padding-bottom: 2px; }
.mark-visual { inset: -5px -9px -13px -4px; }
.visual header { display: flex; align-items: center; gap: 12px; height: 28px; padding: 0 4px 2px 4px; color: #777; }
.visual h2 { flex: 1; font-size: 19px; line-height: 26px; white-space: nowrap; color: #252423; }
.chart {
  display: grid; grid-template-columns: 22px 1fr; margin-top: 6px; padding: 6px 0 11px;
  background-image: linear-gradient(#d2d0ce 1px, transparent 1px), linear-gradient(#d2d0ce 1px, transparent 1px), linear-gradient(#d2d0ce 1px, transparent 1px);
  background-size: 1px 5px; background-repeat: repeat-y; background-position: 109px 0, 193px 0, 277px 0;
}
.ytitle { writing-mode: vertical-rl; text-orientation: sideways; transform: rotate(180deg); text-align: center; font-size: 16px; line-height: 22px; }
.bars li { display: flex; align-items: center; height: 29px; color: #605e5c; }
.bars span { width: 87px; padding-right: 9px; text-align: right; white-space: nowrap; }
.bars b { height: 24px; margin-right: 8px; background: #118dff; box-shadow: 0 0 0 1px #8cc8ff inset; }
.bars .in { padding-right: 8px; line-height: 24px; text-align: right; color: #fff; font-weight: 500; }
.xticks { display: flex; justify-content: space-between; padding-left: 89px; color: #605e5c; }
.xticks span { width: 40px; text-align: center; white-space: nowrap; }
.xtitle { padding-left: 87px; text-align: center; font-size: 16px; line-height: 24px; }
.h { position: absolute; z-index: 1; }
.n, .s { width: 12px; height: 3px; left: 143px; background: #999; }
.w, .e { width: 3px; height: 12px; top: 302px; background: #999; }
.n { top: -1px; } .s { bottom: -2px; } .w { left: -2px; } .e { right: -2px; }
.nw, .ne, .sw, .se { width: 9px; height: 9px; border: 0 solid #999; }
.nw { top: -1px; left: -2px; border-width: 3px 0 0 3px; }
.ne { top: -1px; right: -2px; border-width: 0 2px 0 0; }
.sw { bottom: -2px; left: -2px; border-width: 0 0 4px 4px; }
.se { bottom: -2px; right: -2px; border-width: 0 4px 4px 0; }

/* panes */
.pane-title { display: flex; align-items: center; justify-content: space-between; height: 38px; padding-bottom: 2px; }
.pane-title h2 { font-size: 16px; font-weight: 700; line-height: 24px; }
.search { display: flex; align-items: center; background: #fff; border: 1px solid #8a8886; border-radius: 2px; color: #444; }
.search input { width: 100%; min-width: 0; border: 0; padding: 0 0 1px; background: none; font: inherit; outline: 0; }
.search input::placeholder { color: #444; opacity: 1; }

.filters { border-left: 1px solid #a19f9d; }
.filters-head { height: 81px; padding: 0 9px 0 8px; border-bottom: 1px solid #a19f9d; }
.filters .pane-title { padding-left: 3px; }
.filters .pane-title h2 { margin: 0 auto 0 7px; }
.eye { margin-right: 16px; }
.filters .search { height: 31px; margin: 7px 3px 0 0; padding-left: 10px; gap: 13px; font-size: 13px; }
.filters section { padding: 16px 8px 10px; }
.filters section + section { padding-top: 10px; }
.filters h4 { display: flex; justify-content: space-between; padding-right: 4px; margin-bottom: 9px; }
.card { height: 46px; margin-bottom: 6px; padding: 4px 8px 0; line-height: 18px; border: 1px solid #c8c6c4; border-radius: 2px; background: #fff; }
.drop-here { padding: 14px 0; text-align: center; }

/* page tabs */
.pages { display: flex; height: 35px; padding-left: 10px; }
.view { display: grid; place-items: center; width: 24px; height: 31px; border-bottom: 3px solid transparent; }
.view.on { border-color: #117865; }
.phone { margin: 0 12px 0 20px; }
.arrow { width: 22px; padding-left: 3px; }
.arrow + .arrow { width: 14px; }
.page { padding: 0 20px; background: #fff; border-left: 1px solid #c8c6c4; white-space: nowrap; }
.page.current { border-bottom: 4px solid #117865; padding-top: 4px; }
.add { display: grid; place-items: center; width: 40px; height: 33px; margin-top: 2px; background: #117865; }

/* visualizations */
.viz, .data { position: relative; border-left: 1px solid #dddbd9; }
.viz .pane-title { padding: 0 7px 2px 8px; }
.note { position: absolute; right: 7px; top: -12px; z-index: 5; color: #ee1c25; font-size: 27px; line-height: 40px; }
.sub { padding-left: 8px; font-weight: 500; }
.modes { display: flex; justify-content: space-between; align-items: center; padding: 3px 9px 0 8px; }
.modes button { position: relative; width: 32px; height: 32px; display: grid; place-items: center; }
.modes .on { background: #d2d0ce; border-radius: 2px; }
.mark-fmt { inset: -3px -3px -1px; }
.caret { position: relative; z-index: 1; margin: 4px 0 -1px 15px; }
.gallery { display: grid; grid-template-columns: repeat(6, 28px); grid-auto-rows: 28px; padding: 6px 0 4px 6px; border-top: 1px solid #8a8886; border-bottom: 1px solid #d8d6d4; }
.gallery button { position: relative; display: grid; place-items: center; margin: 2px; }
.gallery .on { background: #e1dfdd; border: 1px solid #605e5c; }
.gallery svg { width: 20px; height: 20px; }
.mark-gal { inset: -4px -13px -4px -10px; }
.gallery text { font: 8px "Open Sans", sans-serif; fill: #1e7fc2; text-anchor: middle; }
.gallery .big { font-size: 15px; font-weight: 600; }
.k { fill: none; stroke: #3b3a39; }
path.w, circle.w { fill: #fff; stroke: #3b3a39; width: auto; height: auto; background: none; }
.b { fill: #83bcec; stroke: #1168b3; }
.bl { fill: none; stroke: #2b7cb8; stroke-width: 1.3px; }
.g { fill: #c8c6c4; stroke: #797775; }
.wells { padding: 8px 6px 0 4px; }
.wells h4 { padding-left: 8px; line-height: 18px; margin-bottom: 4px; }
.wells .strong { font-weight: 500; margin-bottom: 8px; }
.well { position: relative; height: 28px; margin-bottom: 10px; padding: 0 10px; line-height: 26px; background: #fff; border: 1px dashed #c0bebc; }
.well.filled { height: 37px; padding: 3px 2px; }
.chip { display: flex; align-items: center; gap: 4px; height: 24px; padding: 0 3px; background: #edebe9; border: 1px solid #b3b0ad; border-radius: 2px; }
.chip svg { width: 12px; height: 12px; color: #444; }
.chip svg:first-of-type { margin-left: auto; }
.mark-y { inset: -12px -1px 5px -6px; }
.mark-x { inset: -8px -7px 0 -5px; }
.toggle { display: flex; justify-content: space-between; align-items: center; padding: 0 16px 0 8px; margin-bottom: 10px; }
.toggle input { appearance: none; width: 32px; height: 16px; margin: 0; border: 1px solid #605e5c; border-radius: 8px; background: radial-gradient(circle at 8px 7px, #605e5c 4px, #fff 5px); }
.toggle input:checked { border-color: #117865; background: radial-gradient(circle at 22px 7px, #fff 4px, #117865 5px); }
.toggle input:checked::after { content: ""; display: block; width: 8px; height: 4px; margin: 3px 0 0 6px; border: solid #fff; border-width: 0 0 2px 2px; transform: rotate(-45deg); }
.drill { height: 26px; margin: 11px 0 0; padding: 0 8px; line-height: 24px; }

/* data */
.data .pane-title { padding: 0 7px 2px 8px; }
.data .search { height: 27px; margin: 7px 4px 8px; padding-left: 7px; gap: 5px; font-size: 14px; background: #f3f2f1; border-color: #605e5c; }
.tree-wrap { display: flex; justify-content: space-between; padding: 1px 4px 6px 7px; }
.tree { color: #3b3a39; }
.tree li { position: relative; display: flex; align-items: center; height: 24px; padding-left: 31px; white-space: nowrap; }
.tree li.t { padding-left: 0; gap: 4px; }
.tree li.t svg:nth-child(2) { margin-right: 2px; }
.tree li.has-kids { padding-left: 15px; gap: 4px; }
.tree svg { width: 12px; height: 12px; }
.tree label { display: flex; align-items: center; }
.tree label svg { margin: 0 6px 0 8px; }
.tree input { appearance: none; width: 12px; height: 12px; margin: 0; border: 1px solid #797775; border-radius: 2px; }
.tree input:checked { background: #117865; border-color: #117865; }
.tree input:checked::after { content: ""; display: block; width: 8px; height: 4px; margin: 2px 0 0 1px; border: solid #fff; border-width: 0 0 1px 1px; transform: rotate(-45deg); }
.tree .badge { position: absolute; left: 22px; top: 11px; }
.mark-field { left: 19px; top: -5px; width: 110px; height: 34px; }
.scrollbar { width: 8px; margin: -1px 0 28px; background: #c8c8c8; }

/* status bar */
.status { display: flex; justify-content: space-between; align-items: center; height: 21px; padding: 3px 18px 0 4px; border-top: 1px solid #dddbd9; color: #484644; }
.zoom { display: flex; align-items: center; font-size: 13px; }
.zoom b { font-weight: 500; }
.zoom input { appearance: none; width: 100px; height: 10px; margin: 0 6px 0 5px; background: linear-gradient(#605e5c, #605e5c) 0 5px / 100% 1px no-repeat; }
.zoom input::-webkit-slider-thumb { appearance: none; width: 4px; height: 10px; background: #605e5c; }
.zoom span { margin: 0 12px; }
```
